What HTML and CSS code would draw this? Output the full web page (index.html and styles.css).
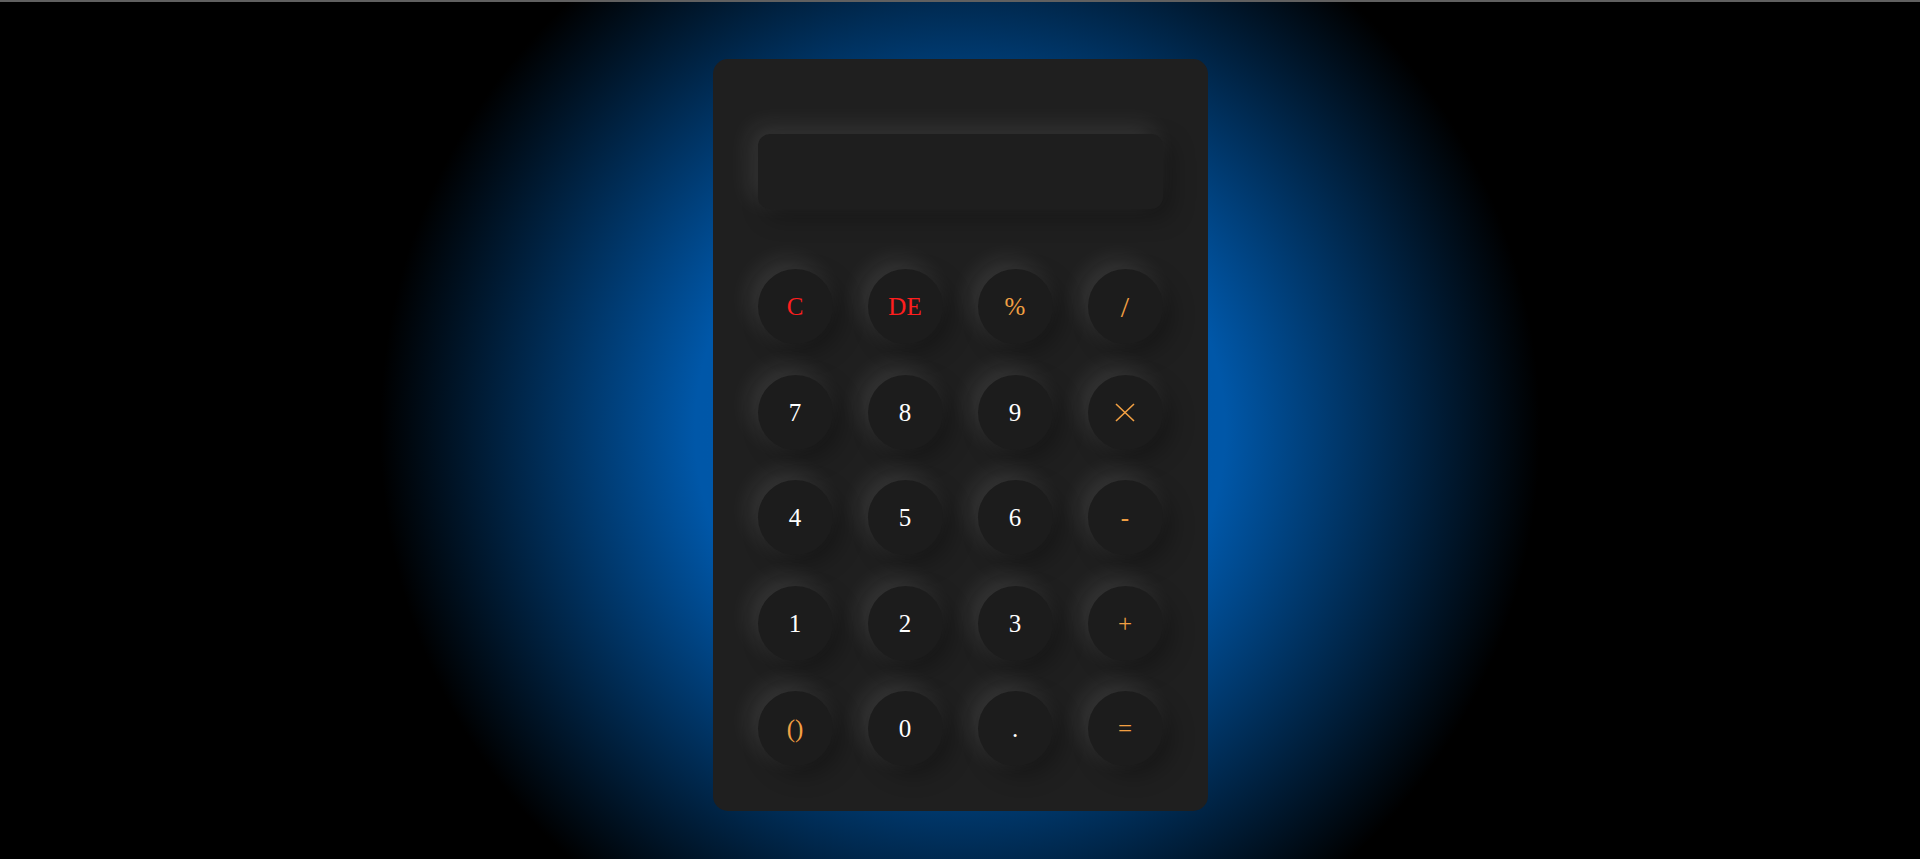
FILE: index.html
```html
<!DOCTYPE html>
<html lang="en">
<head>
<meta charset="utf-8">
<title>Calculator</title>
<link rel="stylesheet" href="styles.css">
</head>
<body>
<div class="topline"></div>
<main class="stage">
  <div class="calculator">
    <div class="display"></div>
    <div class="keys">
      <button class="key red">C</button>
      <button class="key red">DE</button>
      <button class="key op">%</button>
      <button class="key op slash">/</button>

      <button class="key">7</button>
      <button class="key">8</button>
      <button class="key">9</button>
      <button class="key op" aria-label="multiply"><svg class="times" width="20" height="19" viewBox="0 0 20 19"><path d="M1 1 L19 18 M19 1 L1 18" stroke="#f2a043" stroke-width="1.6" fill="none"/></svg></button>

      <button class="key">4</button>
      <button class="key">5</button>
      <button class="key">6</button>
      <button class="key op">-</button>

      <button class="key">1</button>
      <button class="key">2</button>
      <button class="key">3</button>
      <button class="key op">+</button>

      <button class="key op">()</button>
      <button class="key">0</button>
      <button class="key">.</button>
      <button class="key op">=</button>
    </div>
  </div>
</main>
</body>
</html>
```
FILE: styles.css
```css
html, body {
  margin: 0;
  padding: 0;
  background: #000;
}

body {
  height: 859px;
  overflow: hidden;
  font-family: "Liberation Serif", "Times New Roman", serif;
}

.topline {
  height: 2px;
  background: #606060;
}

.stage {
  height: 857px;
  display: flex;
  justify-content: center;
  align-items: flex-start;
  padding-top: 57px;
  box-sizing: border-box;
  background: radial-gradient(circle 580px at 50% 428px, #0058aa 0, #0057a8 265px, #000 580px);
}

.calculator {
  width: 495px;
  box-sizing: border-box;
  padding: 75px 45px 45px;
  background: #1f1f1f;
  border-radius: 15px;
}

.display {
  height: 75px;
  margin-bottom: 60px;
  border-radius: 12px;
  background: #1e1e1e;
  box-shadow: -8px -8px 24px rgba(255, 255, 255, 0.1), 8px 8px 24px rgba(0, 0, 0, 0.3);
}

.keys {
  display: grid;
  grid-template-columns: repeat(4, 75px);
  grid-auto-rows: 75px;
  column-gap: 35px;
  row-gap: 30.5px;
}

.key {
  width: 75px;
  height: 75px;
  padding: 0;
  border: none;
  border-radius: 50%;
  background: #1c1c1c;
  color: #ffffff;
  font-family: "Liberation Serif", "Times New Roman", serif;
  font-size: 25px;
  line-height: 1;
  display: flex;
  align-items: center;
  justify-content: center;
  box-shadow: -8px -8px 24px rgba(255, 255, 255, 0.11), 8px 8px 24px rgba(0, 0, 0, 0.32);
}

.key.red {
  color: #ff1e1e;
}

.key.op {
  color: #f2a043;
}

.key.slash {
  font-size: 30px;
}

.times {
  display: block;
}
```
